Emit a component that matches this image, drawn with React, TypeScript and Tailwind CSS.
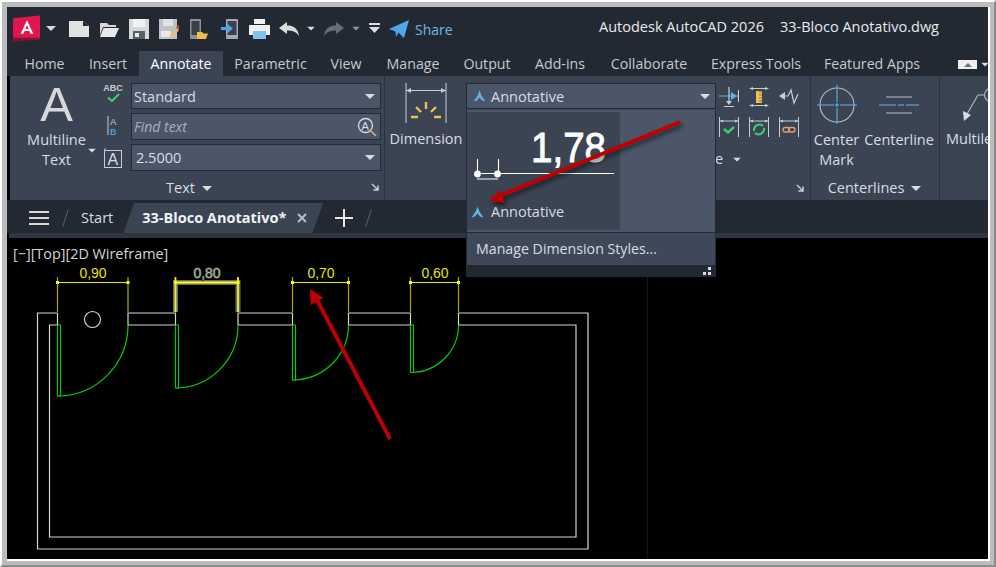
const sans = { fontFamily: '"Open Sans", "Noto Sans", sans-serif' };

const tabs = [
  { name: "Home", w: "w-[65px]" },
  { name: "Insert", w: "w-[62px]" },
  { name: "Annotate", w: "w-[84px]" },
  { name: "Parametric", w: "w-[95px]" },
  { name: "View", w: "w-[56px]" },
  { name: "Manage", w: "w-[78px]" },
  { name: "Output", w: "w-[70px]" },
  { name: "Add-ins", w: "w-[76px]" },
  { name: "Collaborate", w: "w-[102px]" },
  { name: "Express Tools", w: "w-[112px]" },
  { name: "Featured Apps", w: "w-[120px]" },
];

const doors = [
  { x1: 57.5, x2: 128, y: 396 },
  { x1: 175.5, x2: 238, y: 388, selected: true },
  { x1: 292.5, x2: 348.5, y: 380 },
  { x1: 410.5, x2: 458.5, y: 372.5 },
];

function Caret({ className = "" }: { className?: string }) {
  return <span className={`inline-block w-0 h-0 border-x-[5px] border-x-transparent border-t-[5px] border-t-[#d9dde2] ${className}`} />;
}

function AnnoIcon({ className = "" }: { className?: string }) {
  return (
    <svg viewBox="0 0 14 14" className={`w-[13px] h-[13px] ${className}`}>
      <path d="M7 0.5 L9 6 L13.5 12.5 L9.8 11.2 L7 8.2 L4.2 11.2 L0.5 12.5 L5 6 Z" fill="#5fb3ea" />
    </svg>
  );
}

function Combo({ children, arrow = true, h = "h-[27px]" }: { children: React.ReactNode; arrow?: boolean; h?: string }) {
  return (
    <div className={`w-[250px] ${h} bg-[#4c5669] border border-[#232a34] flex items-center pl-[2px] pr-[5px] text-[#d8dde3] text-[14.5px]`}>
      <div className="flex-1 flex items-center">{children}</div>
      {arrow && <Caret />}
    </div>
  );
}

function CornerArrow() {
  return (
    <svg viewBox="0 0 8 8" className="w-[8px] h-[8px]">
      <path d="M1 1 L7 7 M7 2.5 V7 H2.5" stroke="#d0d4da" strokeWidth="1.4" fill="none" />
    </svg>
  );
}

function QuickAccess() {
  return (
    <div className="flex items-center h-full">
      <svg viewBox="0 0 30 27" className="w-[29px] h-[27px] ml-[5px]">
        <path d="M1 3 L29 0 V25 L1 27 Z" fill="#8f0f2e" />
        <path d="M1 3 L29 0 V23 L1 23 Z" fill="#e0174f" />
        <path d="M15.5 5 L22 19 H19.2 L18 16 H13 L11.8 19 H9 Z M13.9 14 H17.1 L15.5 10 Z" fill="#fff" />
      </svg>
      <Caret className="ml-[5px]" />
      <svg viewBox="0 0 20 16" className="w-[20px] h-[16px] ml-[13px]">
        <path d="M0 0 H14 L20 5 V16 H0 Z" fill="#e2e2e2" />
        <path d="M14 0 V5 H20" fill="#222933" />
      </svg>
      <svg viewBox="0 0 20 16" className="w-[20px] h-[16px] ml-[10px]">
        <path d="M1 2 H8 L10 4 H17 V6 H4 L1 14 Z" fill="#d8d8d8" />
        <path d="M4.5 7 H20 L16 16 H1 Z" fill="#e8e8e8" />
      </svg>
      <svg viewBox="0 0 20 20" className="w-[20px] h-[20px] ml-[10px]">
        <path d="M0 0 H20 V20 H0 Z" fill="#d8d8d8" />
        <rect x="4" y="0" width="12" height="8" fill="#f2f2f2" />
        <rect x="4" y="12" width="12" height="8" fill="#5a6068" />
        <rect x="6" y="14" width="4" height="4" fill="#e8e8e8" />
      </svg>
      <svg viewBox="0 0 20 20" className="w-[20px] h-[20px] ml-[10px]">
        <path d="M0 0 H18 V20 H0 Z" fill="#bfc2c6" />
        <rect x="4" y="0" width="10" height="7" fill="#e2e2e2" />
        <rect x="2" y="12" width="10" height="6" fill="#e8e8e8" />
        <path d="M10 20 L11 16 L18 9 L20 11 L13 19 Z" fill="#e8c070" />
        <path d="M17 8 L19 6 L21 8 L19 11 Z" fill="#d64a3a" />
      </svg>
      <svg viewBox="0 0 19 20" className="w-[19px] h-[20px] ml-[10px]">
        <rect x="1" y="0" width="11" height="20" rx="1" fill="#8d9196" />
        <rect x="2.5" y="2" width="8" height="14" fill="#3a414c" />
        <path d="M8 13 H13 L14.5 14.5 H19 L17 20 H8 Z" fill="#f0bd4a" />
      </svg>
      <svg viewBox="0 0 17 20" className="w-[17px] h-[20px] ml-[13px]">
        <rect x="5" y="0" width="12" height="20" rx="1" fill="#a5a8ac" />
        <rect x="6.5" y="2" width="9" height="14" fill="#3a414c" />
        <path d="M0 8 H6 V4.5 L12 9.5 L6 14.5 V11 H0 Z" fill="#4ea8e8" />
      </svg>
      <svg viewBox="0 0 21 20" className="w-[21px] h-[20px] ml-[11px]">
        <rect x="5" y="0" width="11" height="5" fill="#f2f2f2" />
        <path d="M0 6 H21 V16 H0 Z" fill="#f0f0f0" />
        <rect x="4" y="12" width="13" height="8" fill="#7cc4f0" />
      </svg>
      <svg viewBox="0 0 20 14" className="w-[20px] h-[14px] ml-[9px]">
        <path d="M0 6 L8 0 V3.5 C14 3.5 19 6 20 14 C17 9.5 13 8.5 8 8.5 V12 Z" fill="#dcdcdc" />
      </svg>
      <Caret className="ml-[7px] scale-75" />
      <svg viewBox="0 0 20 14" className="w-[20px] h-[14px] ml-[8px]">
        <path d="M20 6 L12 0 V3.5 C6 3.5 1 6 0 14 C3 9.5 7 8.5 12 8.5 V12 Z" fill="#6a6e74" />
      </svg>
      <Caret className="ml-[7px] scale-75 opacity-60" />
      <svg viewBox="0 0 11 11" className="w-[11px] h-[11px] ml-[8px]">
        <rect x="0" y="0" width="11" height="2" fill="#d9dde2" />
        <path d="M0 4 H11 L5.5 10 Z" fill="#d9dde2" />
      </svg>
      <svg viewBox="0 0 20 18" className="w-[20px] h-[18px] ml-[9px]">
        <path d="M0 9 L20 0 L15 18 L9.5 12.5 L7 17 L6.5 11.5 Z" fill="#4ea8e8" />
      </svg>
      <span className="ml-[6px] mt-[2px] text-[14px] text-[#6cb8ea]">Share</span>
    </div>
  );
}

function TextPanel() {
  return (
    <div className="w-[375px] border-r border-[#2b323d] flex flex-col">
      <div className="flex flex-1 pt-[7px]">
        <div className="w-[94px] flex flex-col items-center text-[14.5px] leading-[20px] text-[#d8dde3] relative">
          <div className="h-[47px] pr-[1px] -mt-[3px] mb-[3px] text-[49px] leading-[49px] text-[#d8d8d8]" style={{ fontFamily: '"Liberation Sans", sans-serif' }}>A</div>
          <div className="pr-[1px]">Multiline</div>
          <div className="pr-[1px]">Text</div>
          <Caret className="absolute right-[7px] top-[65px] scale-75" />
        </div>
        <div className="w-[27px] flex flex-col items-start">
          <div className="h-[31px] w-[18px] flex flex-col items-center">
            <span className="text-[9px] leading-[10px] font-bold text-[#c8ccd2]" style={{ fontFamily: '"Liberation Sans", sans-serif' }}>ABC</span>
            <svg viewBox="0 0 13 9" className="w-[13px] h-[9px]"><path d="M1 4.5 L5 8 L12 1" stroke="#3ecf6e" strokeWidth="2" fill="none" /></svg>
          </div>
          <div className="h-[31px] w-[18px] flex items-start justify-center pt-[2px]">
            <svg viewBox="0 0 12 20" className="w-[12px] h-[20px]">
              <path d="M1 0 V19" stroke="#c8ccd2" strokeWidth="1" />
              <text x="3" y="9" fontSize="9.5" fill="#c8ccd2" fontFamily="Liberation Sans">A</text>
              <text x="3" y="19" fontSize="9.5" fill="#5fb3ea" fontFamily="Liberation Sans">B</text>
            </svg>
          </div>
          <svg viewBox="0 0 18 20" className="w-[18px] h-[20px] mt-[3px]">
            <rect x="0.5" y="2.5" width="17" height="17" fill="none" stroke="#c8ccd2" />
            <rect x="0" y="0.5" width="2" height="2" fill="#5fb3ea" />
            <text x="3.5" y="16.5" fontSize="16" fill="#d8dde3" fontFamily="Liberation Sans">A</text>
          </svg>
        </div>
        <div className="flex flex-col gap-[4px]">
          <Combo h="h-[26px] pt-[1px]">Standard</Combo>
          <Combo arrow={false}>
            <span className="flex-1 italic text-[#aab1bb] text-[14px]">Find text</span>
            <svg viewBox="0 0 20 20" className="w-[20px] h-[20px] -mr-[2px]">
              <circle cx="8.5" cy="8.5" r="7" fill="none" stroke="#d8dde3" strokeWidth="1.3" />
              <text x="4.5" y="12.5" fontSize="11" fill="#d8dde3" fontFamily="Liberation Sans">A</text>
              <path d="M14 14 L19 19" stroke="#e8b060" strokeWidth="1.6" />
            </svg>
          </Combo>
          <Combo><span className="pl-[2px]">2.5000</span></Combo>
        </div>
      </div>
      <div className="h-[25px] relative flex items-center justify-center gap-[7px] pr-[16px] pt-[1px] text-[14.5px] text-[#d8dde3]">
        <span>Text</span>
        <Caret />
        <span className="absolute right-[5px] top-[8px] flex"><CornerArrow /></span>
      </div>
    </div>
  );
}

function DimIcons() {
  const tick = "#c8ccd2";
  return (
    <div className="grid grid-cols-3 gap-x-[10px] gap-y-[10px] w-[80px]">
      <svg viewBox="0 0 20 20" className="w-[20px] h-[20px]">
        <path d="M0 9 H20" stroke="#5fb3ea" strokeWidth="1" />
        <path d="M10 0 V14 M5 19.5 H15 M19.5 3 V15" stroke={tick} strokeWidth="1.2" />
        <path d="M12 5 L18 9 L12 13 Z" fill="#5fb3ea" />
        <path d="M7 14 H13 L10 18 Z" fill={tick} />
      </svg>
      <svg viewBox="0 0 20 20" className="w-[20px] h-[20px]">
        <path d="M2 1.5 H18 M2 18.5 H18" stroke={tick} strokeWidth="1.2" />
        <path d="M0 1.5 L4 0 V3 Z M20 1.5 L16 0 V3 Z M0 18.5 L4 17 V20 Z M20 18.5 L16 17 V20 Z" fill={tick} />
        <rect x="7" y="4" width="6" height="12" fill="#f0bd5a" />
        <path d="M10 5 H13 M10 8 H13 M10 11 H13 M10 14 H13" stroke="#8a6a20" strokeWidth="0.8" />
      </svg>
      <svg viewBox="0 0 20 20" className="w-[20px] h-[20px]">
        <path d="M0 9 L6 5 V13 Z" fill={tick} />
        <path d="M5 9 H9 L12 3 L15 16 L19 7" stroke={tick} strokeWidth="1.2" fill="none" />
      </svg>
      <svg viewBox="0 0 20 20" className="w-[20px] h-[20px]">
        <path d="M0.5 0 V20 M19.5 0 V20" stroke={tick} />
        <path d="M1 4 H19" stroke={tick} />
        <path d="M1 4 L4 2.5 V5.5 Z M19 4 L16 2.5 V5.5 Z" fill={tick} />
        <path d="M5 12 L9 15.5 L15 10" stroke="#3ecf6e" strokeWidth="2.4" fill="none" />
      </svg>
      <svg viewBox="0 0 20 20" className="w-[20px] h-[20px]">
        <path d="M0.5 0 V20 M19.5 0 V20" stroke={tick} />
        <path d="M1 4 H19" stroke={tick} />
        <path d="M1 4 L4 2.5 V5.5 Z M19 4 L16 2.5 V5.5 Z" fill={tick} />
        <path d="M5 14 A5.5 5.5 0 0 1 14 9 M15 11 A5.5 5.5 0 0 1 6 16" stroke="#3ecf6e" strokeWidth="2" fill="none" />
      </svg>
      <svg viewBox="0 0 20 20" className="w-[20px] h-[20px]">
        <path d="M0.5 0 V20 M19.5 0 V20" stroke={tick} />
        <path d="M1 4 H19" stroke={tick} />
        <path d="M1 4 L4 2.5 V5.5 Z M19 4 L16 2.5 V5.5 Z" fill={tick} />
        <rect x="4" y="10.5" width="6.5" height="4.5" rx="2.2" fill="none" stroke="#e0a070" strokeWidth="1.3" />
        <rect x="9.5" y="10.5" width="6.5" height="4.5" rx="2.2" fill="none" stroke="#e0a070" strokeWidth="1.3" />
      </svg>
    </div>
  );
}

function DimensionPanel() {
  return (
    <div className="w-[426px] border-r border-[#2b323d] flex pt-[7px] relative">
      <div className="w-[81px] flex flex-col items-center">
        <svg viewBox="0 0 42 41" className="w-[42px] h-[41px] ml-[1px]">
          <path d="M1 0 V40 M41 0 V40" stroke="#c8ccd2" />
          <path d="M1 7.5 H41" stroke="#c8ccd2" />
          <path d="M1 7.5 L6 5 V10 Z M41 7.5 L36 5 V10 Z" fill="#c8ccd2" />
          <path d="M21 19 V26 M11 24 L16 29 M31 24 L26 29 M6 34 H13 M29 34 H36" stroke="#f0bd5a" strokeWidth="2.4" />
        </svg>
        <span className="mt-[5px] text-[14.5px] leading-[20px] text-[#d8dde3] ml-[1px]">Dimension</span>
      </div>
      <Combo h="h-[26px] pt-[1px]">
        <AnnoIcon className="ml-[4px] mr-[5px]" />
        Annotative
      </Combo>
      <div className="ml-[3px] pt-[4px] flex flex-col">
        <DimIcons />
        <div className="mt-[12px] -ml-[4px] flex items-center gap-[9px] text-[14.5px] leading-[20px] text-[#d8dde3]">
          <span>e</span>
          <Caret className="scale-75" />
        </div>
      </div>
      <span className="absolute right-[6px] bottom-[8px] flex"><CornerArrow /></span>
    </div>
  );
}

function CenterlinesPanel() {
  return (
    <div className="w-[129px] border-r border-[#2b323d] flex flex-col pt-[9px] text-[14.5px] leading-[20px] text-[#d8dde3]">
      <div className="flex flex-1 pl-[3px] gap-[6px]">
        <div className="flex flex-col items-center w-[45px]">
          <svg viewBox="0 0 40 40" className="w-[40px] h-[40px]">
            <circle cx="20" cy="20" r="17" fill="none" stroke="#b8bcc2" strokeWidth="1.1" />
            <path d="M0 20 H17 M23 20 H40 M20 0 V17 M20 23 V39 M18 20 H22 M20 18 V22" stroke="#5fb3ea" strokeWidth="1.1" />
          </svg>
          <span className="mt-[5px]">Center</span>
          <span>Mark</span>
        </div>
        <div className="flex flex-col items-center w-[68px]">
          <svg viewBox="0 0 40 40" className="w-[40px] h-[40px]">
            <path d="M7 12 H33 M7 28 H33" stroke="#b8bcc2" strokeWidth="1.1" />
            <path d="M0 20 H17 M19 20 H25 M27 20 H40" stroke="#5fb3ea" strokeWidth="1.1" />
          </svg>
          <span className="mt-[5px]">Centerline</span>
        </div>
      </div>
      <div className="h-[25px] flex items-center justify-center gap-[7px] pr-[1px] pt-[1px]">
        <span>Centerlines</span>
        <Caret />
      </div>
    </div>
  );
}

function MultileaderPanel() {
  return (
    <div className="flex-1 overflow-hidden pt-[11px] pl-[6px] text-[14.5px] leading-[20px] text-[#d8dde3]">
      <svg viewBox="0 0 42 36" className="w-[42px] h-[36px]">
        <path d="M32 8 H38 M32 8 L21 27" stroke="#b8bcc2" strokeWidth="1.1" fill="none" />
        <path d="M18 34 L17 24 L25 28 Z" fill="#d8dde3" />
        <circle cx="45" cy="8" r="6.5" fill="none" stroke="#b8bcc2" strokeWidth="1.1" />
      </svg>
      <div className="mt-[6px] w-[60px] whitespace-nowrap">Multileader</div>
    </div>
  );
}

function DocTabs() {
  return (
    <div className="h-[33px] bg-[#222933] flex items-center pt-[3px] text-[14.5px] text-[#d8dde3]">
      <div className="ml-[22px] w-[20px] h-[14px] flex flex-col justify-between">
        <div className="h-[2px] bg-[#d8d8d8]" />
        <div className="h-[2px] bg-[#d8d8d8]" />
        <div className="h-[2px] bg-[#d8d8d8]" />
      </div>
      <div className="ml-[16px] w-[1px] h-[18px] bg-[#59616e] rotate-[18deg]" />
      <span className="ml-[15px]">Start</span>
      <div className="ml-[10px] w-[200px] h-full bg-[#3b4453] [clip-path:polygon(11px_0,100%_0,189px_100%,0_100%)] flex items-center">
        <span className="ml-[19px] font-bold text-[14.5px] text-[#f0f2f4]">33-Bloco Anotativo*</span>
        <svg viewBox="0 0 10 10" className="w-[10px] h-[10px] ml-[11px]">
          <path d="M1 1 L9 9 M9 1 L1 9" stroke="#b8bcc2" strokeWidth="2" />
        </svg>
      </div>
      <svg viewBox="0 0 18 18" className="w-[18px] h-[18px] ml-[12px]">
        <path d="M9 0 V18 M0 9 H18" stroke="#e8e8e8" strokeWidth="2" />
      </svg>
      <div className="ml-[15px] w-[1px] h-[18px] bg-[#59616e] rotate-[18deg]" />
    </div>
  );
}

function Drawing() {
  const walls = "M57.5 313 H37.5 V549 H588 V313 H458.5 V325 H576 V537 H49.5 V325 H57.5 V313 M128 325 V313 H175.5 V325 H128 M238 325 V313 H292.5 V325 H238 M348.5 325 V313 H410.5 V325 H348.5";
  return (
    <svg viewBox="9 238 979 321" className="absolute inset-0 w-full h-full">
      <path d="M647.5 277 V559" stroke="#14171d" />
      <path d={walls} fill="none" stroke="#d4d4d4" strokeWidth="1.2" />
      <circle cx="92.5" cy="319.5" r="8" fill="none" stroke="#dcdcdc" strokeWidth="1.1" />
      {doors.map((d) => (
        <g key={d.x1}>
          <path d={`M${d.x1} 325 V${d.y} H${d.x1 + 3} V325 H${d.x1}`} fill="none" stroke="#00d000" strokeWidth="1.1" />
          <path d={`M${d.x2} 325 A${d.x2 - d.x1} ${d.y - 325} 0 0 1 ${d.x1 + 1} ${d.y}`} fill="none" stroke="#00d000" strokeWidth="1.2" />
          {d.selected && (
            <path d={`M${d.x1} 312 V282.5 H${d.x2} V312`} fill="none" stroke="#9a9a8a" strokeWidth="5" opacity="0.7" />
          )}
          <path d={`M${d.x1} 277 V312 M${d.x2} 277 V312`} stroke={d.selected ? "#eeee30" : "#b4aa00"} strokeWidth={d.selected ? 1.8 : 1.2} />
          <path d={`M${d.x1} 282.5 H${d.x2}`} stroke={d.selected ? "#ffff30" : "#ecec00"} strokeWidth={d.selected ? 1.8 : 1.2} />
          <rect x={d.x1 - 1.5} y="281" width="3" height="3" fill="#ffff00" />
          <rect x={d.x2 - 1.5} y="281" width="3" height="3" fill="#ffff00" />
        </g>
      ))}
      <text x="93" y="278" textAnchor="middle" fontSize="14" fill="#e6e600" fontFamily="Liberation Sans">0,90</text>
      <text x="207" y="278" textAnchor="middle" fontSize="14" fill="#a9bf9c" stroke="#3a3a3a" strokeWidth="1.5" paintOrder="stroke" fontFamily="Liberation Sans">0,80</text>
      <text x="321" y="278" textAnchor="middle" fontSize="14" fill="#e6e600" fontFamily="Liberation Sans">0,70</text>
      <text x="435" y="278" textAnchor="middle" fontSize="14" fill="#e6e600" fontFamily="Liberation Sans">0,60</text>
    </svg>
  );
}

function StyleMenu() {
  return (
    <div className="absolute left-[466px] top-[110px] w-[250px] h-[167px] bg-[#222933] border-x border-[#232a34] flex flex-col">
      <div className="h-[123px] bg-[#4c5669] border-b border-[#232a34] pt-[2px] pb-[2px] flex">
        <div className="w-[153px] bg-[#3b4453] relative">
          <svg viewBox="0 0 153 90" className="w-[153px] h-[90px]">
            <text x="64" y="50" fontSize="42" textLength="75" lengthAdjust="spacingAndGlyphs" fill="#fff" stroke="#fff" strokeWidth="0.9" fontFamily="Liberation Sans">1,78</text>
            <path d="M10.5 47 V62 M31.5 47 V62 M10 61.5 H147 M10 67 H31" stroke="#fff" strokeWidth="1.1" />
            <circle cx="10.5" cy="62" r="3.4" fill="#fff" />
            <circle cx="30.5" cy="62" r="3.4" fill="#fff" />
          </svg>
          <div className="absolute left-[4px] top-[90px] flex items-center gap-[7px] text-[14.5px] leading-[20px] text-[#d8dde3]">
            <AnnoIcon />
            Annotative
          </div>
        </div>
      </div>
      <div className="h-[32px] bg-[#3f4858] flex items-center pl-[9px] text-[14.2px] text-[#d8dde3]">Manage Dimension Styles...</div>
      <div className="flex-1 flex items-center justify-end pr-[4px]">
        <div className="grid grid-cols-2 gap-[2px]">
          <span />
          <span className="w-[3px] h-[3px] bg-[#d8dde3]" />
          <span className="w-[3px] h-[3px] bg-[#d8dde3]" />
          <span className="w-[3px] h-[3px] bg-[#d8dde3]" />
        </div>
      </div>
    </div>
  );
}

export default function App() {
  return (
    <div className="relative w-[996px] h-[567px] overflow-hidden" style={sans}>
      <div className="h-full border-2 border-t-white border-l-white border-r-[#8c8c8c] border-b-[#8c8c8c]">
        <div className="h-full border-[5px] border-r-[4px] border-b-[4px] border-[#bdbdbd]">
          <div className="h-full flex flex-col border-r-2 border-b-2 border-white bg-black">
            <div className="h-[43px] bg-[#222933] flex items-center justify-between">
              <QuickAccess />
              <div className="flex gap-[16px] pr-[49px] -mt-[3px] text-[14.5px] text-[#e8eaed]">
                <span>Autodesk AutoCAD 2026</span>
                <span>33-Bloco Anotativo.dwg</span>
              </div>
            </div>
            <div className="h-[26px] bg-[#222933] flex items-end pl-[5px] text-[14.2px] text-[#c3cad2] relative">
              {tabs.map((t) => (
                <div
                  key={t.name}
                  className={t.name === "Annotate"
                    ? `h-[25px] ${t.w} bg-[#3b4453] text-white flex items-center justify-center whitespace-nowrap`
                    : `h-[25px] ${t.w} flex items-center justify-center whitespace-nowrap`}
                >
                  {t.name}
                </div>
              ))}
              <div className="absolute left-[951px] top-[10px] w-[19px] h-[9px] bg-[#f0f0f0] flex items-center justify-center">
                <span className="w-0 h-0 border-x-[4px] border-x-transparent border-b-[4px] border-b-[#6a6e74]" />
              </div>
              <Caret className="absolute left-[973px] top-[12px] scale-75" />
            </div>
            <div className="h-[124px] ml-[3px] bg-[#3b4453] flex">
              <TextPanel />
              <DimensionPanel />
              <CenterlinesPanel />
              <MultileaderPanel />
            </div>
            <DocTabs />
            <div className="h-[5px] ml-[2px] bg-[#2e3541]" />
            <div className="relative flex-1 bg-black ml-[2px]">
              <Drawing />
              <div className="absolute left-[4px] top-[6px] text-[14.4px] leading-[20px] text-[#d4d4d4]">[−][Top][2D Wireframe]</div>
            </div>
          </div>
        </div>
      </div>
      <StyleMenu />
      <svg viewBox="0 0 996 567" className="absolute inset-0 w-[996px] h-[567px] pointer-events-none drop-shadow-[2px_3px_2px_rgba(0,0,0,0.55)]">
        <path d="M680 122 L498 196.5" stroke="#c00000" strokeWidth="3.8" />
        <path d="M489 200.7 L500 190 L505 202.7 Z" fill="#c00000" />
        <path d="M390 439 L316 298" stroke="#c00000" strokeWidth="3.8" />
        <path d="M310 289 L323.3 297.7 L310.7 305 Z" fill="#c00000" />
      </svg>
    </div>
  );
}
